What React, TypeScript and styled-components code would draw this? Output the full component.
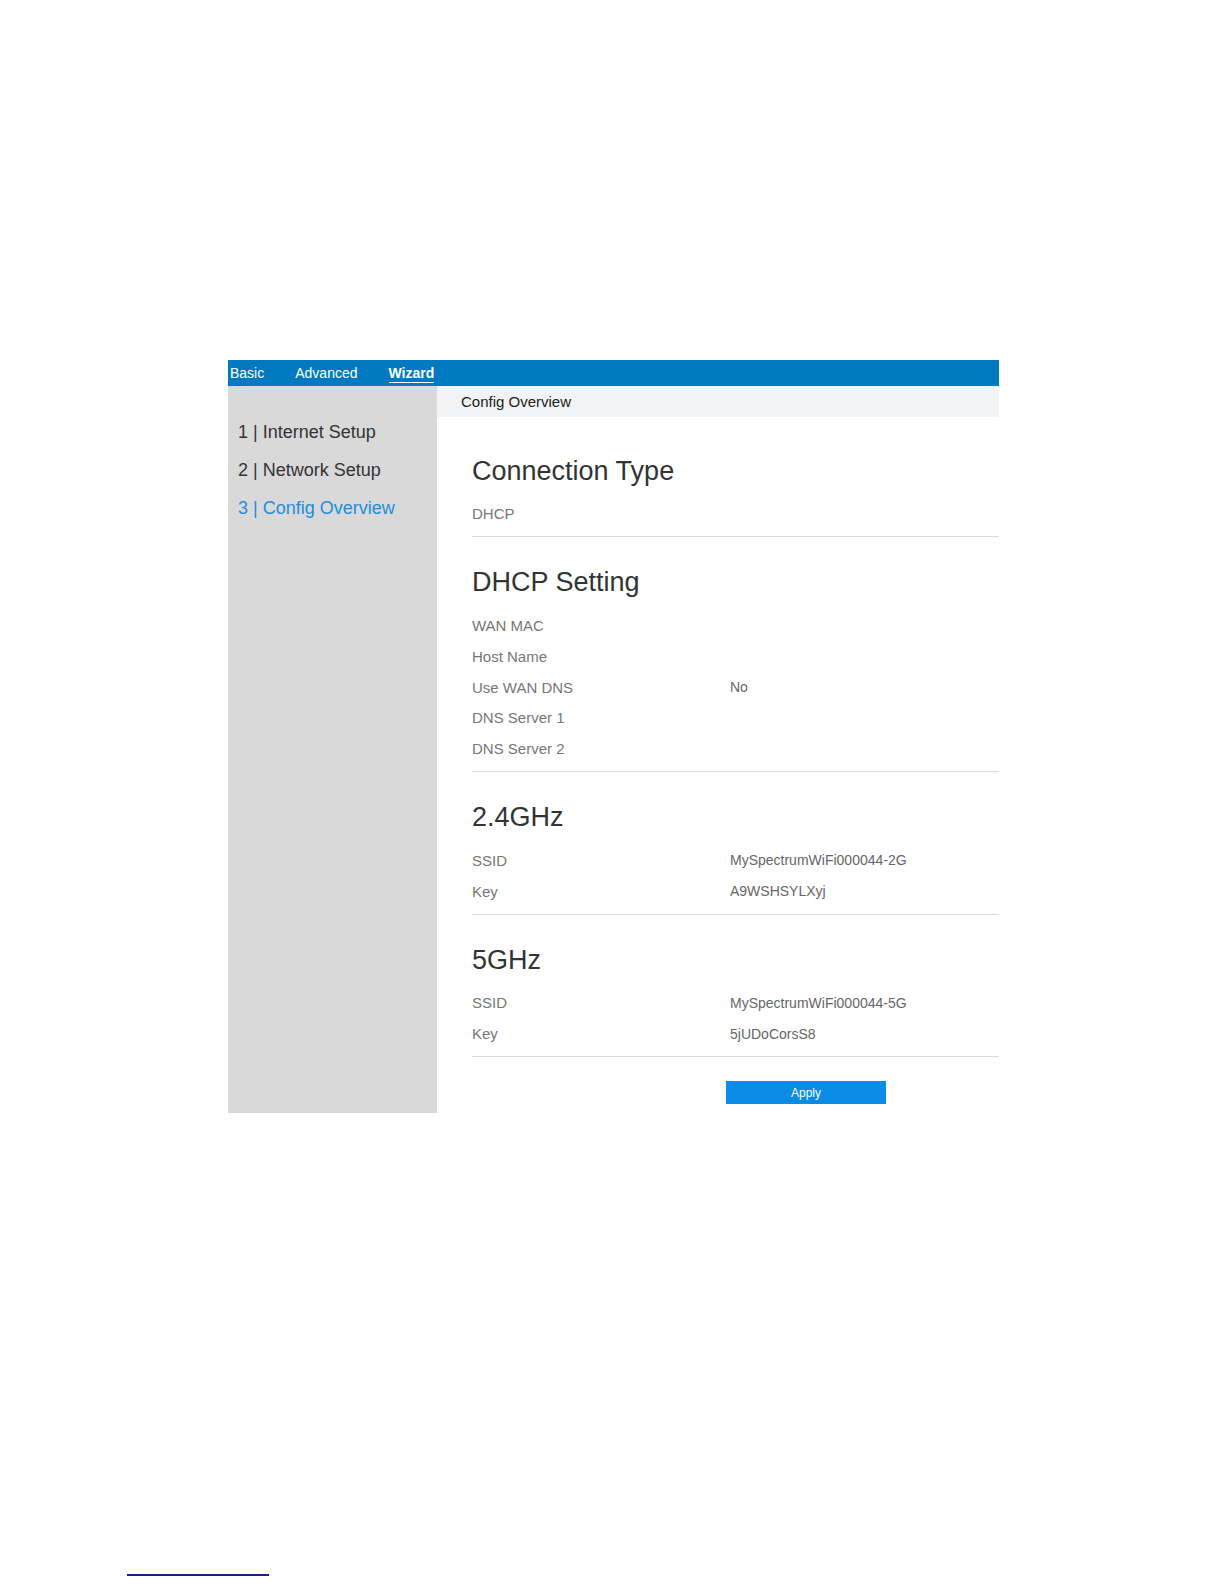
import React from "react";
import styled, { createGlobalStyle } from "styled-components";

const Global = createGlobalStyle`
  html, body { margin: 0; padding: 0; background: #ffffff; }
  body { font-family: "Liberation Sans", Arial, sans-serif; }
`;

const Page = styled.div`
  padding-top: 360px;
  display: flow-root;
`;

const Frame = styled.div`
  margin-left: 228px;
  width: 771px;
  display: flex;
  flex-direction: column;
`;

const TopBar = styled.nav`
  height: 26px;
  background: #0079c1;
  display: flex;
  align-items: center;
  padding-left: 2px;
  gap: 31px;
`;

const NavItem = styled.span<{ $active?: boolean }>`
  color: #ffffff;
  font-size: 14px;
  line-height: 17px;
  font-weight: ${(p) => (p.$active ? 700 : 400)};
  border-bottom: 1px solid ${(p) => (p.$active ? "#ffffff" : "transparent")};
  margin-top: 1px;
`;

const Body = styled.div`
  display: flex;
  height: 727px;
`;

const Sidebar = styled.aside`
  width: 209px;
  flex-shrink: 0;
  background: #d9d9d9;
  padding: 27px 0 0 10px;
  box-sizing: border-box;
  display: flex;
  flex-direction: column;
`;

const Step = styled.div<{ $active?: boolean }>`
  font-size: 18px;
  line-height: 38px;
  color: ${(p) => (p.$active ? "#1e8de0" : "#333333")};
`;

const Main = styled.main`
  flex: 1;
  display: flex;
  flex-direction: column;
`;

const Crumb = styled.div`
  height: 31px;
  background: #f2f3f5;
  display: flex;
  align-items: center;
  padding-left: 24px;
  font-size: 15px;
  color: #222222;
`;

const Content = styled.div`
  padding-left: 35px;
  display: flex;
  flex-direction: column;
`;

const Section = styled.section<{ $first?: boolean }>`
  padding-top: ${(p) => (p.$first ? 37.5 : 29)}px;
  padding-bottom: 7px;
  border-bottom: 1px solid #dcdcdc;
`;

const Heading = styled.h2`
  margin: 0 0 12px;
  font-size: 27px;
  line-height: 32px;
  font-weight: 400;
  color: #333333;
`;

const Row = styled.div`
  display: grid;
  grid-template-columns: 258px 1fr;
  height: 30.75px;
  align-items: center;
`;

const Label = styled.span`
  font-size: 15px;
  color: #777777;
`;

const Value = styled.span`
  font-size: 14px;
  color: #666666;
`;

const Actions = styled.div`
  padding: 24px 0 0 254px;
`;

const ApplyButton = styled.button`
  display: block;
  width: 160px;
  height: 23px;
  border: none;
  background: #0a8be6;
  color: #ffffff;
  font-family: "Liberation Sans", Arial, sans-serif;
  font-size: 12px;
  padding: 0;
  cursor: pointer;
`;

const FootRule = styled.div`
  margin: 461px 0 0 127px;
  width: 142px;
  height: 2px;
  background: #1c1c96;
`;

type Item = { label: string; value?: string };
type Group = { title: string; rows: Item[] };

const groups: Group[] = [
  { title: "Connection Type", rows: [{ label: "DHCP" }] },
  {
    title: "DHCP Setting",
    rows: [
      { label: "WAN MAC" },
      { label: "Host Name" },
      { label: "Use WAN DNS", value: "No" },
      { label: "DNS Server 1" },
      { label: "DNS Server 2" },
    ],
  },
  {
    title: "2.4GHz",
    rows: [
      { label: "SSID", value: "MySpectrumWiFi000044-2G" },
      { label: "Key", value: "A9WSHSYLXyj" },
    ],
  },
  {
    title: "5GHz",
    rows: [
      { label: "SSID", value: "MySpectrumWiFi000044-5G" },
      { label: "Key", value: "5jUDoCorsS8" },
    ],
  },
];

export default function App() {
  return (
    <Page>
      <Global />
      <Frame>
        <TopBar>
          <NavItem>Basic</NavItem>
          <NavItem>Advanced</NavItem>
          <NavItem $active>Wizard</NavItem>
        </TopBar>
        <Body>
          <Sidebar>
            <Step>1 | Internet Setup</Step>
            <Step>2 | Network Setup</Step>
            <Step $active>3 | Config Overview</Step>
          </Sidebar>
          <Main>
            <Crumb>Config Overview</Crumb>
            <Content>
              {groups.map((g, i) => (
                <Section key={g.title} $first={i === 0}>
                  <Heading>{g.title}</Heading>
                  {g.rows.map((r) => (
                    <Row key={r.label}>
                      <Label>{r.label}</Label>
                      <Value>{r.value ?? ""}</Value>
                    </Row>
                  ))}
                </Section>
              ))}
              <Actions>
                <ApplyButton>Apply</ApplyButton>
              </Actions>
            </Content>
          </Main>
        </Body>
      </Frame>
      <FootRule />
    </Page>
  );
}
